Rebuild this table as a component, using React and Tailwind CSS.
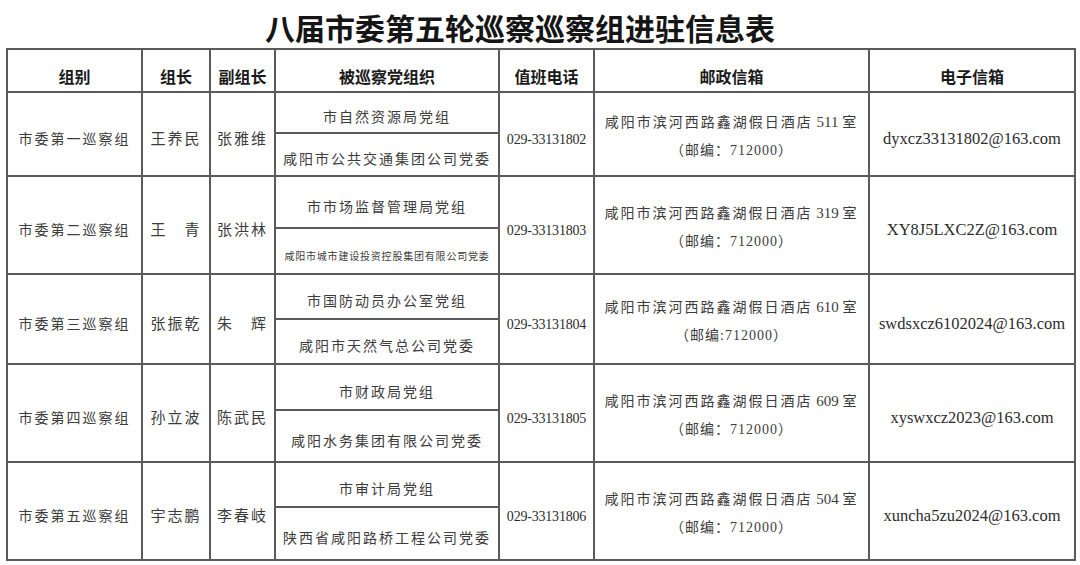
import React from "react";

const groups = [
  {
    name: "市委第一巡察组",
    leader: "王养民",
    deputy: "张雅维",
    orgs: ["市自然资源局党组", "咸阳市公共交通集团公司党委"],
    phone: "029-33131802",
    room: "511",
    zip: "（邮编：712000）",
    email: "dyxcz33131802@163.com",
    rows: ["h-[41px]", "h-[43px]"],
  },
  {
    name: "市委第二巡察组",
    leader: "王　青",
    deputy: "张洪林",
    orgs: ["市市场监督管理局党组", "咸阳市城市建设投资控股集团有限公司党委"],
    phone: "029-33131803",
    room: "319",
    zip: "（邮编：712000）",
    email: "XY8J5LXC2Z@163.com",
    rows: ["h-[52px]", "h-[46px]"],
    small: true,
  },
  {
    name: "市委第三巡察组",
    leader: "张振乾",
    deputy: "朱　辉",
    orgs: ["市国防动员办公室党组", "咸阳市天然气总公司党委"],
    phone: "029-33131804",
    room: "610",
    zip: "（邮编:712000）",
    email: "swdsxcz6102024@163.com",
    rows: ["h-[45px]", "h-[45px]"],
  },
  {
    name: "市委第四巡察组",
    leader: "孙立波",
    deputy: "陈武民",
    orgs: ["市财政局党组", "咸阳水务集团有限公司党委"],
    phone: "029-33131805",
    room: "609",
    zip: "（邮编：712000）",
    email: "xyswxcz2023@163.com",
    rows: ["h-[46px]", "h-[52px]"],
  },
  {
    name: "市委第五巡察组",
    leader: "宇志鹏",
    deputy: "李春岐",
    orgs: ["市审计局党组", "陕西省咸阳路桥工程公司党委"],
    phone: "029-33131806",
    room: "504",
    zip: "（邮编：712000）",
    email: "xuncha5zu2024@163.com",
    rows: ["h-[45px]", "h-[53px]"],
  },
];

const headers = ["组别", "组长", "副组长", "被巡察党组织", "值班电话", "邮政信箱", "电子信箱"];

// every cell sits a little low, like the scanned sheet
const line = "border-2 border-[#5a5a5a] p-0 text-center align-middle";
const cell = `${line} pt-[10px]`;
const cn = "text-[14px] tracking-[2px] text-[#3c3c3c]";

const App = () => {
  return (
    <div
      className="w-[1080px] h-[565px] bg-white overflow-hidden"
      style={{ fontFamily: '"Liberation Serif", "Noto Sans CJK SC", serif' }}
    >
      <div className="w-[1040px] h-[48px] flex items-center justify-center pt-[6px]">
        <h1
          className="text-[30px] font-bold text-[#151515] leading-none"
          style={{ fontFamily: '"Noto Sans CJK SC", sans-serif' }}
        >
          八届市委第五轮巡察巡察组进驻信息表
        </h1>
      </div>

      <table className="ml-[6px] w-[1070px] table-fixed border-collapse border-2 border-[#5a5a5a]">
        <colgroup>
          <col className="w-[135px]" />
          <col className="w-[68px]" />
          <col className="w-[65px]" />
          <col className="w-[224px]" />
          <col className="w-[95px]" />
          <col className="w-[275px]" />
          <col className="w-[206px]" />
        </colgroup>
        <thead>
          <tr className="h-[43px]">
            {headers.map((h) => (
              <th
                key={h}
                className={`${cell} text-[16px] font-bold text-[#1a1a1a]`}
                style={{ fontFamily: '"Noto Sans CJK SC", sans-serif' }}
              >
                {h}
              </th>
            ))}
          </tr>
        </thead>
        <tbody>
          {groups.map((g) => (
            <React.Fragment key={g.name}>
              <tr className={g.rows[0]}>
                <td rowSpan={2} className={`${cell} ${cn}`}>
                  {g.name}
                </td>
                <td rowSpan={2} className={`${cell} ${cn} text-[15px]`}>
                  {g.leader}
                </td>
                <td rowSpan={2} className={`${cell} ${cn} text-[15px]`}>
                  {g.deputy}
                </td>
                <td className={`${cell} ${cn}`}>{g.orgs[0]}</td>
                <td rowSpan={2} className={`${cell} text-[14px] tracking-[-0.2px] text-[#2c2c2c]`}>
                  {g.phone}
                </td>
                <td rowSpan={2} className={`${line} pt-[4px] ${cn} leading-[28px]`}>
                  <div>
                    咸阳市滨河西路鑫湖假日酒店<span className="text-[15px] tracking-[0px]"> {g.room} </span>室
                  </div>
                  <div className="tracking-[1px]">{g.zip}</div>
                </td>
                <td rowSpan={2} className={`${cell} text-[16.5px] text-[#2c2c2c]`}>
                  {g.email}
                </td>
              </tr>
              <tr className={g.rows[1]}>
                <td
                  className={`${cell} ${
                    g.small ? "text-[10px] tracking-[0.8px] text-[#3c3c3c]" : cn
                  }`}
                >
                  {g.orgs[1]}
                </td>
              </tr>
            </React.Fragment>
          ))}
        </tbody>
      </table>
    </div>
  );
};

export default App;
